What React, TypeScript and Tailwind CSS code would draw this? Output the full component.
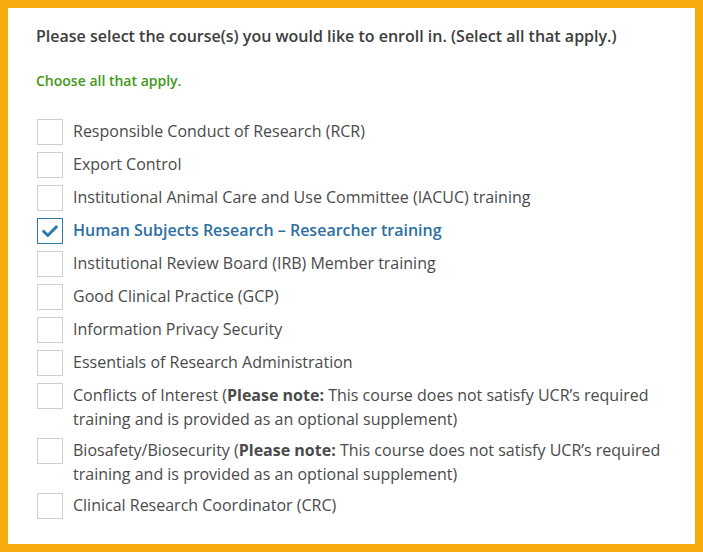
import { useState } from 'react';

interface Course {
  id: string;
  label: string;
  note?: boolean;
}

const courses: Course[] = [
  { id: 'rcr', label: 'Responsible Conduct of Research (RCR)' },
  { id: 'export', label: 'Export Control' },
  { id: 'iacuc', label: 'Institutional Animal Care and Use Committee (IACUC) training' },
  { id: 'hsr', label: 'Human Subjects Research – Researcher training' },
  { id: 'irb', label: 'Institutional Review Board (IRB) Member training' },
  { id: 'gcp', label: 'Good Clinical Practice (GCP)' },
  { id: 'ips', label: 'Information Privacy Security' },
  { id: 'era', label: 'Essentials of Research Administration' },
  { id: 'coi', label: 'Conflicts of Interest', note: true },
  { id: 'bio', label: 'Biosafety/Biosecurity', note: true },
  { id: 'crc', label: 'Clinical Research Coordinator (CRC)' },
];

function CheckBox({ checked }: { checked: boolean }) {
  return (
    <span
      className={`flex h-[26px] w-[26px] shrink-0 items-center justify-center border bg-white ${
        checked ? 'border-[#2f79ad]' : 'border-[#cfcfcf]'
      }`}
    >
      {checked && (
        <svg viewBox="0 0 24 24" className="h-[18px] w-[18px]" fill="none">
          <path
            d="M3.5 12.5l5.5 5.5L20.5 6.5"
            stroke="#2f79ad"
            strokeWidth="3.8"
            strokeLinecap="round"
            strokeLinejoin="round"
          />
        </svg>
      )}
    </span>
  );
}

export default function App() {
  const [selected, setSelected] = useState<string[]>(['hsr']);

  const toggle = (id: string) => {
    setSelected((prev) => (prev.includes(id) ? prev.filter((x) => x !== id) : [...prev, id]));
  };

  return (
    <div className="h-[552px] w-[703px] bg-[#f8aa0d] p-2 font-['Open_Sans',sans-serif]">
      <div className="h-full bg-white px-[28px] pt-[16px]">
        <p className="text-[16px] font-semibold leading-6 text-[#3d3d3d]">
          Please select the course(s) you would like to enroll in. (Select all that apply.)
        </p>
        <p className="mt-[23px] text-[14px] font-semibold leading-5 text-[#3f9a1b]">
          Choose all that apply.
        </p>

        <ul className="mt-[28px] flex flex-col gap-[7px] pl-[1px]">
          {courses.map((course) => {
            const checked = selected.includes(course.id);
            return (
              <li
                key={course.id}
                onClick={() => toggle(course.id)}
                className="flex cursor-pointer items-start gap-[10px]"
              >
                <CheckBox checked={checked} />
                <span
                  className={`text-[16px] leading-6 ${
                    checked ? 'font-semibold text-[#2d6fa3]' : 'text-[#4a4a4a]'
                  }`}
                >
                  {course.label}
                  {course.note && (
                    <>
                      {' '}(<strong className="font-bold">Please note:</strong> This course does not
                      satisfy UCR’s required training and is provided as an optional supplement)
                    </>
                  )}
                </span>
              </li>
            );
          })}
        </ul>
      </div>
    </div>
  );
}
